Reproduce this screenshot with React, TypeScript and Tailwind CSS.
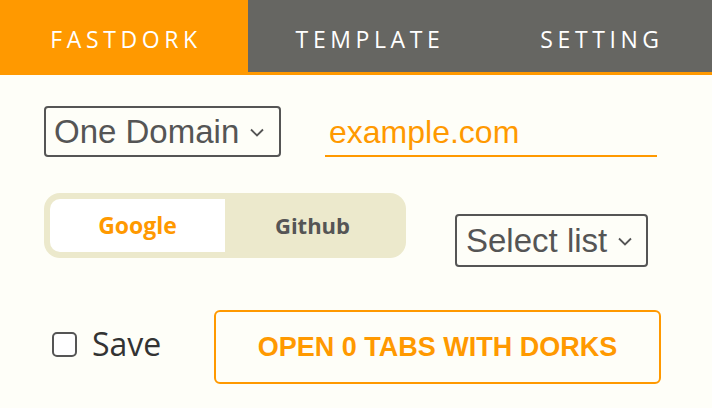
import React from "react";

function Chevron() {
  return (
    <svg width="16" height="12" viewBox="0 0 16 12" className="ml-[10px] shrink-0">
      <path d="M2 3.5 L8 9.5 L14 3.5" fill="none" stroke="#555" strokeWidth="1.8" />
    </svg>
  );
}

export default function App() {
  return (
    <div className="w-[712px] h-[408px] bg-[#fefef8] overflow-hidden" style={{ fontFamily: "'Open Sans', sans-serif" }}>
      <div className="flex h-[75px] border-b-[3px] border-[#ff9900] bg-[#666662]">
        <div className="w-[248px] bg-[#ff9900] flex items-center justify-center text-white text-[23px] tracking-[0.2em] pt-[6px] pl-[4px]">FASTDORK</div>
        <div className="w-[240px] flex items-center justify-center text-white text-[23px] tracking-[0.2em] pt-[6px] pl-[4px]">TEMPLATE</div>
        <div className="w-[224px] flex items-center justify-center text-white text-[23px] tracking-[0.2em] pt-[6px] pl-[4px]">SETTING</div>
      </div>

      <div className="flex items-center pl-[44px] pt-[31px]">
        <div className="h-[51px] w-[237px] border-2 border-[#555] rounded-[4px] flex items-center pl-[8px] text-[#555] text-[33px]" style={{ fontFamily: "'Liberation Sans', Arial, sans-serif" }}>
          One Domain
          <Chevron />
        </div>
        <div className="ml-[44px] w-[332px] h-[51px] border-b-2 border-[#ff9900] flex items-center pl-[4px] pt-[2px] text-[#ff9900] text-[32px]" style={{ fontFamily: "'Liberation Sans', Arial, sans-serif" }}>
          example.com
        </div>
      </div>

      <div className="flex items-start pl-[44px] pt-[36px]">
        <div className="w-[362px] h-[65px] rounded-[16px] bg-[#ece9cc] flex p-[6px]">
          <div className="w-[175px] bg-white rounded-l-[10px] flex items-center justify-center text-[#ff9900] font-bold text-[23px]">Google</div>
          <div className="flex-1 flex items-center justify-center text-[#555] font-bold text-[22px]">Github</div>
        </div>
        <div className="ml-[49px] mt-[21px] h-[53px] w-[193px] border-2 border-[#555] rounded-[4px] flex items-center pl-[9px] text-[#555] text-[33px]" style={{ fontFamily: "'Liberation Sans', Arial, sans-serif" }}>
          Select list
          <Chevron />
        </div>
      </div>

      <div className="flex items-center pl-[52px] pt-[43px]">
        <div className="w-[25px] h-[25px] border-2 border-[#555] rounded-[5px] bg-white mb-[6px]" />
        <div className="ml-[15px] text-[#333] text-[32px] mb-[6px]">Save</div>
        <div className="ml-[auto] mr-[51px] w-[447px] h-[74px] border-2 border-[#ff9900] rounded-[6px] flex items-center justify-center text-[#ff9900] font-bold text-[27px]" style={{ fontFamily: "'Liberation Sans', Arial, sans-serif" }}>
          OPEN 0 TABS WITH DORKS
        </div>
      </div>
    </div>
  );
}
